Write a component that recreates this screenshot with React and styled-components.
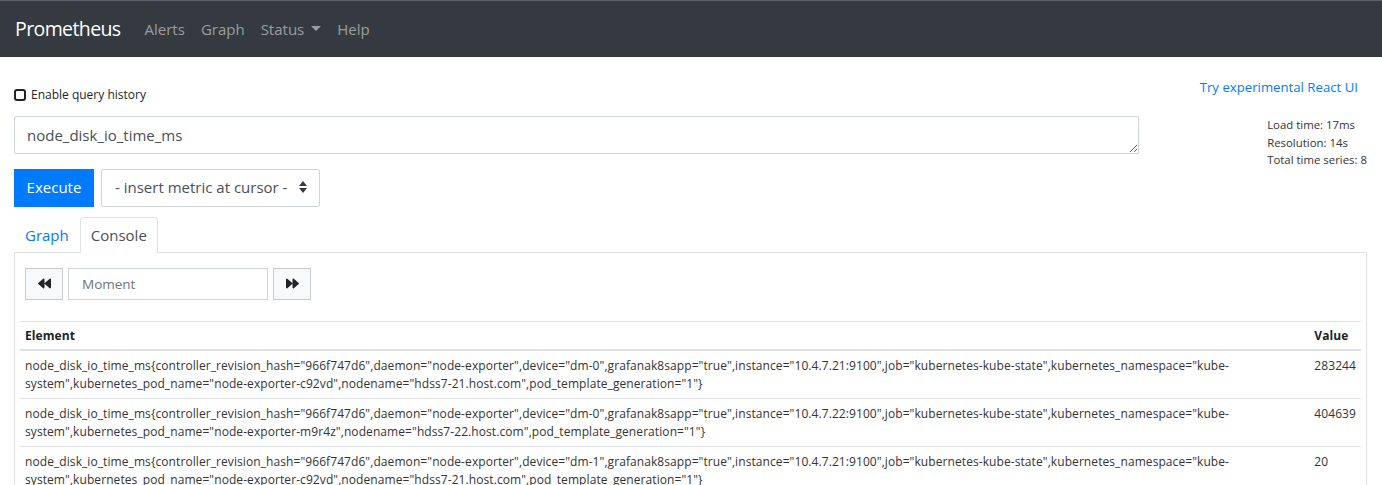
import React, { useState } from 'react';
import styled, { createGlobalStyle } from 'styled-components';
import { FaBackward, FaForward } from 'react-icons/fa';

const GlobalStyle = createGlobalStyle`
  body {
    margin: 0;
    background: #fff;
    color: #212529;
    font-family: 'Open Sans', 'Noto Sans', Arial, sans-serif;
  }
  * { box-sizing: border-box; }
`;

const NavBar = styled.nav`
  display: flex;
  align-items: center;
  height: 57px;
  padding: 0 15px 1px;
  background: #343a40;
  border-top: 1px solid #5c6166;
`;
const Brand = styled.a`
  color: #fff;
  font-size: 19.5px;
  letter-spacing: -0.6px;
  margin-right: 16px;
  text-decoration: none;
`;
const NavLink = styled.a`
  display: flex;
  align-items: center;
  padding: 0 8px;
  color: rgba(255, 255, 255, 0.5);
  font-size: 15px;
  text-decoration: none;
`;
const Caret = styled.span`
  display: inline-block;
  margin-left: 7px;
  border-top: 5px solid rgba(255, 255, 255, 0.5);
  border-left: 5px solid transparent;
  border-right: 5px solid transparent;
`;

const Page = styled.main`
  padding: 0 15px 0 14px;
`;
const TopBar = styled.div`
  display: flex;
  justify-content: space-between;
  align-items: flex-start;
  padding-top: 20px;
`;
const CheckLabel = styled.label`
  display: flex;
  align-items: center;
  gap: 5px;
  margin-top: 10px;
  font-size: 12px;
  line-height: 16px;
  color: #212529;
`;
const Check = styled.input`
  appearance: none;
  margin: 0;
  width: 12px;
  height: 12px;
  border: 2px solid #222;
  border-radius: 3px;
  background: #fff;
`;
const ReactLink = styled.a`
  color: #007bff;
  font-size: 13.2px;
  line-height: 21px;
  margin-right: 9px;
  text-decoration: none;
`;

const QueryRow = styled.div`
  display: flex;
  align-items: flex-start;
  margin-top: 13px;
`;
const QueryInput = styled.textarea`
  flex: 0 0 1125px;
  height: 38px;
  padding: 7px 12px;
  border: 1px solid #ced4da;
  border-radius: 2px;
  font-family: inherit;
  font-size: 15px;
  line-height: 22px;
  color: #495057;
`;
const Stats = styled.div`
  margin-left: auto;
  font-size: 11.4px;
  line-height: 17.5px;
  color: #333;
`;

const ExecRow = styled.div`
  display: flex;
  gap: 7px;
`;
const ExecButton = styled.button`
  width: 80px;
  height: 38px;
  padding: 0 0 2px;
  border: 1px solid #007bff;
  border-radius: 0;
  background: #007bff;
  color: #fff;
  font-family: inherit;
  font-size: 15px;
`;
const MetricSelect = styled.div`
  display: flex;
  align-items: center;
  justify-content: space-between;
  width: 219px;
  height: 38px;
  padding: 0 12px 2px 13px;
  border: 1px solid #ced4da;
  border-radius: 2px;
  font-size: 15px;
  color: #495057;
`;

const Tabs = styled.div`
  display: flex;
  margin-top: 10px;
  border-bottom: 1px solid #dee2e6;
`;
const Tab = styled.a`
  display: block;
  margin-bottom: -1px;
  padding: 6px 10px;
  font-size: 15px;
  line-height: 22px;
  text-decoration: none;
  border: 1px solid ${p => (p.$active ? '#dee2e6' : 'transparent')};
  border-bottom-color: ${p => (p.$active ? '#fff' : 'transparent')};
  border-radius: 4px 4px 0 0;
  background: ${p => (p.$active ? '#fff' : 'transparent')};
  color: ${p => (p.$active ? '#495057' : '#007bff')};
`;
const TabContent = styled.div`
  padding: 15px 5px 5px;
  border: 1px solid #dee2e6;
  border-top: 0;
`;
const Controls = styled.div`
  display: flex;
  gap: 5px;
  padding: 0 5px;
`;
const StepButton = styled.button`
  display: flex;
  align-items: center;
  justify-content: center;
  width: 38px;
  height: 32px;
  padding: 0;
  border: 1px solid #c9cacb;
  background: #f8f9fa;
  color: #212529;
`;
const MomentInput = styled.input`
  width: 200px;
  height: 32px;
  padding: 0 13px;
  border: 1px solid #ced4da;
  font-family: inherit;
  font-size: 13.5px;
  color: #495057;
  &::placeholder { color: #6c757d; }
`;

const Table = styled.table`
  width: 100%;
  margin-top: 21px;
  border-collapse: collapse;
  font-size: 12px;
  letter-spacing: 0.08px;
  line-height: 18px;
`;
const Th = styled.th`
  padding: 5px 5px 4px;
  text-align: left;
  font-weight: 700;
  color: #212529;
  border-top: 1px solid #dee2e6;
  border-bottom: 2px solid #dee2e6;
`;
const Td = styled.td`
  padding: 6px 5px 5px;
  vertical-align: top;
  color: #333;
  border-top: 1px solid #dee2e6;
`;

function SelectArrows() {
  return (
    <svg width="8" height="12" viewBox="0 0 8 12">
      <path d="M4 0 L8 5 H0 Z M0 7 H8 L4 12 Z" fill="#343a40" />
    </svg>
  );
}

const base = 'node_disk_io_time_ms{controller_revision_hash="966f747d6",daemon="node-exporter"';
const series = [
  ['dm-0', '10.4.7.21', 'c92vd', '21', '283244'],
  ['dm-0', '10.4.7.22', 'm9r4z', '22', '404639'],
  ['dm-1', '10.4.7.21', 'c92vd', '21', '20'],
  ['dm-1', '10.4.7.22', 'm9r4z', '22', '36'],
  ['sda', '10.4.7.21', 'c92vd', '21', '284512'],
  ['sda', '10.4.7.22', 'm9r4z', '22', '405872'],
  ['sr0', '10.4.7.21', 'c92vd', '21', '12'],
  ['sr0', '10.4.7.22', 'm9r4z', '22', '9'],
].map(([dev, ip, pod, node, value]) => ({
  element: `${base},device="${dev}",grafanak8sapp="true",instance="${ip}:9100",job="kubernetes-kube-state",kubernetes_namespace="kube-system",kubernetes_pod_name="node-exporter-${pod}",nodename="hdss7-${node}.host.com",pod_template_generation="1"}`,
  value,
}));

export default function App() {
  const [expr, setExpr] = useState('node_disk_io_time_ms');
  const [history, setHistory] = useState(false);

  return (
    <>
      <GlobalStyle />
      <NavBar>
        <Brand href="#">Prometheus</Brand>
        <NavLink href="#">Alerts</NavLink>
        <NavLink href="#">Graph</NavLink>
        <NavLink href="#">Status<Caret /></NavLink>
        <NavLink href="#">Help</NavLink>
      </NavBar>
      <Page>
        <TopBar>
          <CheckLabel>
            <Check type="checkbox" checked={history} onChange={e => setHistory(e.target.checked)} />
            Enable query history
          </CheckLabel>
          <ReactLink href="#">Try experimental React UI</ReactLink>
        </TopBar>
        <QueryRow>
          <QueryInput value={expr} onChange={e => setExpr(e.target.value)} />
          <Stats>
            Load time: 17ms<br />
            Resolution: 14s<br />
            Total time series: 8
          </Stats>
        </QueryRow>
        <ExecRow>
          <ExecButton>Execute</ExecButton>
          <MetricSelect>- insert metric at cursor - <SelectArrows /></MetricSelect>
        </ExecRow>
        <Tabs>
          <Tab href="#">Graph</Tab>
          <Tab href="#" $active>Console</Tab>
        </Tabs>
        <TabContent>
          <Controls>
            <StepButton><FaBackward size={13} /></StepButton>
            <MomentInput placeholder="Moment" />
            <StepButton><FaForward size={13} /></StepButton>
          </Controls>
          <Table>
            <thead>
              <tr>
                <Th>Element</Th>
                <Th>Value</Th>
              </tr>
            </thead>
            <tbody>
              {series.map((s, i) => (
                <tr key={i}>
                  <Td>{s.element}</Td>
                  <Td>{s.value}</Td>
                </tr>
              ))}
            </tbody>
          </Table>
        </TabContent>
      </Page>
    </>
  );
}
